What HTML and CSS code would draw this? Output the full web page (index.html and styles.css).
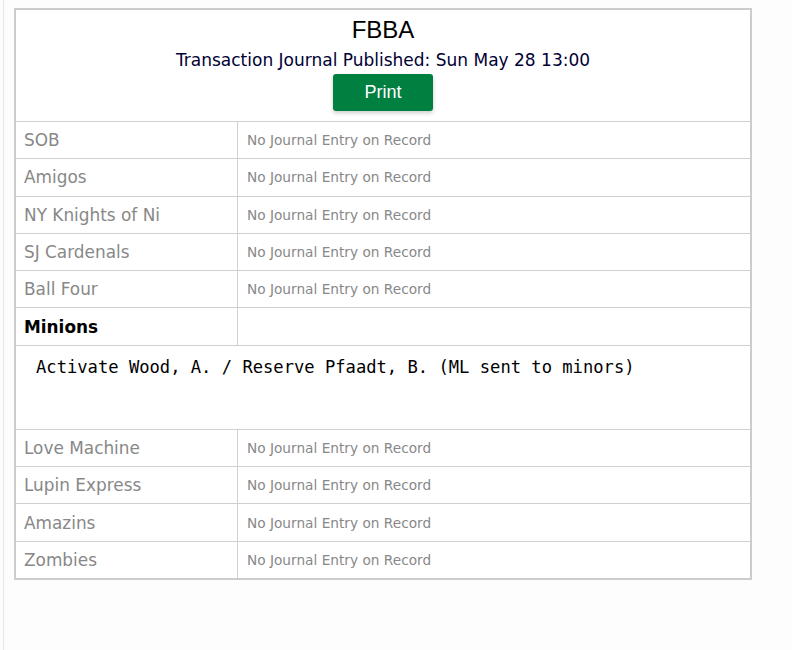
FILE: index.html
```html
<!DOCTYPE html>
<html>
<head>
<meta charset="utf-8">
<link rel="stylesheet" href="styles.css">
</head>
<body>
<div class="page">
  <table class="journal">
    <tr>
      <th colspan="2" class="head">
        <div class="title">FBBA</div>
        <div class="subtitle">Transaction Journal Published: Sun May 28 13:00</div>
        <button class="print">Print</button>
      </th>
    </tr>
    <tr><td class="team">SOB</td><td class="none">No Journal Entry on Record</td></tr>
    <tr><td class="team">Amigos</td><td class="none">No Journal Entry on Record</td></tr>
    <tr><td class="team">NY Knights of Ni</td><td class="none">No Journal Entry on Record</td></tr>
    <tr><td class="team">SJ Cardenals</td><td class="none">No Journal Entry on Record</td></tr>
    <tr><td class="team">Ball Four</td><td class="none">No Journal Entry on Record</td></tr>
    <tr><td class="team active">Minions</td><td class="none"></td></tr>
    <tr><td colspan="2" class="entry"><pre>Activate Wood, A. / Reserve Pfaadt, B. (ML sent to minors)</pre></td></tr>
    <tr><td class="team">Love Machine</td><td class="none">No Journal Entry on Record</td></tr>
    <tr><td class="team">Lupin Express</td><td class="none">No Journal Entry on Record</td></tr>
    <tr><td class="team">Amazins</td><td class="none">No Journal Entry on Record</td></tr>
    <tr><td class="team">Zombies</td><td class="none">No Journal Entry on Record</td></tr>
  </table>
</div>
</body>
</html>
```

FILE: styles.css
```css
html, body {
  margin: 0;
  padding: 0;
  background: #fdfdfd;
}
.page {
  margin-left: 3px;
  border-left: 1px solid #e6e6e6;
  min-height: 650px;
  box-sizing: border-box;
  padding: 8px 0 0 10px;
}
.journal {
  width: 738px;
  border-collapse: collapse;
  border: 2px solid #cccccc;
  background: #ffffff;
  font-family: "DejaVu Sans", Verdana, sans-serif;
}
.journal td, .journal th {
  border: 1px solid #d0d0d0;
  padding: 0;
}
.head {
  height: 111px;
  text-align: center;
  font-weight: normal;
  vertical-align: top;
}
.title {
  font-family: "Liberation Sans", Arial, sans-serif;
  font-size: 24px;
  color: #000;
  margin-top: 6px;
  line-height: 28px;
}
.subtitle {
  font-size: 17px;
  color: #000033;
  line-height: 20px;
  margin-top: 6px;
}
.print {
  margin-top: 4px;
  width: 100px;
  height: 37px;
  border: none;
  border-radius: 3px;
  background: #008040;
  color: #fff;
  font-family: "Liberation Sans", Arial, sans-serif;
  font-size: 18px;
  box-shadow: 0 2px 4px rgba(0,0,0,0.2);
  padding: 0;
}
.team {
  width: 213px;
  height: 36.3px;
  padding: 0 0 0 8px !important;
  font-size: 16.9px;
  color: #888888;
}
.team.active {
  color: #000;
  font-weight: bold;
}
.none {
  padding-left: 9px !important;
  font-size: 13.7px;
  color: #888888;
}
.entry {
  height: 83px;
  vertical-align: top;
}
.entry pre {
  margin: 11px 0 0 20px;
  font-family: "DejaVu Sans Mono", Consolas, monospace;
  font-size: 17.15px;
  color: #000;
}
```
